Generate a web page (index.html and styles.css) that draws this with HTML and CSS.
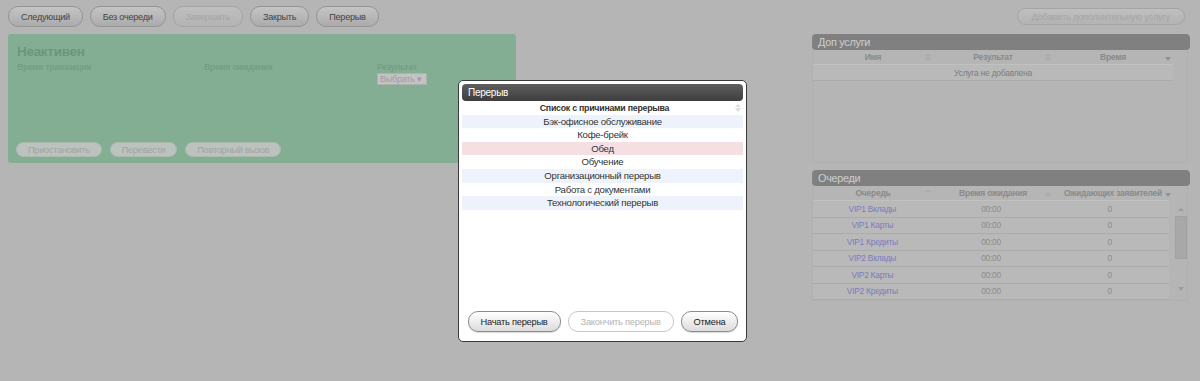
FILE: index.html
```html
<!DOCTYPE html>
<html lang="ru">
<head>
  <meta charset="UTF-8" />
  <title>Рабочее место оператора</title>
  <link rel="stylesheet" href="styles.css">
</head>
<body>

<div class="page">
  <div class="toolbar">
    <div class="toolbar-left">
      <button class="btn">Следующий</button>
      <button class="btn">Без очереди</button>
      <button class="btn" disabled>Завершить</button>
      <button class="btn">Закрыть</button>
      <button class="btn">Перерыв</button>
    </div>
    <button class="btn btn-small" disabled>Добавить дополнительную услугу</button>
  </div>

  <div class="main">
    <div class="state-panel">
      <h2>Неактивен</h2>
      <div class="state-fields">
        <div class="field f-trans">Время транзакции</div>
        <div class="field f-wait">Время ожидания</div>
        <div class="field f-result">Результат<span class="select">Выбрать ▾</span></div>
      </div>
      <div class="state-actions">
        <button class="btn btn-faded" disabled>Приостановить</button>
        <button class="btn btn-faded" disabled>Перевести</button>
        <button class="btn btn-faded" disabled>Повторный вызов</button>
      </div>
    </div>

    <div class="side">
      <div class="panel">
        <div class="panel-title">Доп услуги</div>
        <div class="panel-body services">
          <table class="grid">
            <thead>
              <tr>
                <th><div class="th-in"><span>Имя</span><i class="sort both"></i></div></th>
                <th><div class="th-in"><span>Результат</span><i class="sort both"></i></div></th>
                <th><div class="th-in"><span>Время</span><i class="sort down active"></i></div></th>
              </tr>
            </thead>
            <tbody>
              <tr><td colspan="3">Услуга не добавлена</td></tr>
            </tbody>
          </table>
        </div>
      </div>

      <div class="panel">
        <div class="panel-title">Очереди</div>
        <div class="panel-body queues">
          <table class="grid">
            <thead>
              <tr>
                <th><div class="th-in"><span>Очередь</span><i class="sort up"></i></div></th>
                <th><div class="th-in"><span>Время ожидания</span><i class="sort down"></i></div></th>
                <th><div class="th-in"><span>Ожидающих заявителей</span><i class="sort down active"></i></div></th>
              </tr>
            </thead>
          </table>
          <div class="scroll-wrap">
            <table class="grid">
              <tbody>
                <tr><td class="q-name">VIP1 Вклады</td><td>00:00</td><td>0</td></tr>
                <tr><td class="q-name">VIP1 Карты</td><td>00:00</td><td>0</td></tr>
                <tr><td class="q-name">VIP1 Кредиты</td><td>00:00</td><td>0</td></tr>
                <tr><td class="q-name">VIP2 Вклады</td><td>00:00</td><td>0</td></tr>
                <tr><td class="q-name">VIP2 Карты</td><td>00:00</td><td>0</td></tr>
                <tr><td class="q-name">VIP2 Кредиты</td><td>00:00</td><td>0</td></tr>
              </tbody>
            </table>
            <div class="scrollbar">
              <i class="arr up"></i>
              <div class="track"><div class="thumb"></div></div>
              <i class="arr down"></i>
            </div>
          </div>
        </div>
      </div>
    </div>
  </div>
</div>

<div class="overlay"></div>

<div class="dialog">
  <div class="dialog-title">Перерыв</div>
  <div class="reasons">
    <div class="reasons-head"><span>Список с причинами перерыва</span><i class="sort both"></i></div>
    <div class="reason alt">Бэк-офисное обслуживание</div>
    <div class="reason">Кофе-брейк</div>
    <div class="reason selected">Обед</div>
    <div class="reason">Обучение</div>
    <div class="reason alt">Организационный перерыв</div>
    <div class="reason">Работа с документами</div>
    <div class="reason alt">Технологический перерыв</div>
  </div>
  <div class="dialog-buttons">
    <button class="btn btn-dlg">Начать перерыв</button>
    <button class="btn btn-dlg" disabled>Закончить перерыв</button>
    <button class="btn btn-dlg">Отмена</button>
  </div>
</div>

</body>
</html>
```

FILE: styles.css
```css
body {
  margin: 0;
  font-family: "Liberation Sans", Arial, sans-serif;
  letter-spacing: -0.25px;
  background: #e3e3e3;
  color: #333;
  height: 381px;
  overflow: hidden;
}
.page { padding: 6px 10px 0 8px; }

/* buttons */
.btn {
  font-family: inherit;
  letter-spacing: inherit;
  font-size: 9.1px;
  height: 21px;
  padding: 0 12px;
  white-space: nowrap;
  border: 1px solid #b9b9b9;
  border-radius: 10px;
  background: linear-gradient(#f6f6f6, #d6d6d6);
  color: #555;
  cursor: pointer;
}
.btn:disabled { color: #cfcfcf; background: linear-gradient(#f0f0f0, #e0e0e0); border-color: #cdcdcd; }
.btn-small { height: 17px; margin: 2px 5px 0 0; padding: 0 14px; border-radius: 9px; font-size: 9.3px; }

.toolbar { display: flex; justify-content: space-between; align-items: flex-start; height: 28px; }
.toolbar-left { display: flex; gap: 7px; }

.main { display: flex; justify-content: space-between; }

/* left state panel */
.state-panel {
  width: 508px;
  height: 129px;
  box-sizing: border-box;
  background: #a6dab9;
  border-radius: 3px;
  padding: 10px 8px 0 9px;
  display: flex;
  flex-direction: column;
}
.state-panel h2 { margin: 0; font-size: 13.5px; letter-spacing: -0.3px; color: #88bb99; line-height: 16px; }
.state-fields { display: flex; font-size: 8.6px; font-weight: bold; color: #92c6a4; margin-top: 2px; height: 80px; }
.field { line-height: 11px; }
.f-trans { width: 187px; }
.f-wait { width: 173px; }
.f-result { display: flex; flex-direction: column; align-items: flex-start; }
.select {
  font-weight: normal;
  font-size: 9px;
  background: #f4f4f4;
  color: #c6c6c6;
  padding: 0 4px 0 2px;
  border: 1px solid #ddd;
  line-height: 10px;
}
.state-actions { display: flex; gap: 8px; margin-left: -1px; }
.btn-faded {
  height: 15px;
  font-size: 9.2px;
  padding: 0 11px;
  background: #ebf3ee !important;
  border-color: #d8e8de !important;
  color: #c7d0ca !important;
}

/* right side panels */
.side { width: 378px; }
.panel { margin-bottom: 7px; }
.panel-title {
  background: #a0a0a0;
  color: #fff;
  font-size: 10.8px;
  line-height: 16px;
  padding-left: 6px;
  border-radius: 4px;
}
.panel-body { border: 1px solid #dcdcdc; border-top: none; margin-right: 2px; }
.services { height: 112px; }
.queues { height: 114px; }

.grid { width: 360px; border-collapse: collapse; table-layout: fixed; font-size: 8.4px; }
.grid th { font-weight: bold; font-size: 8.5px; color: #adadad; height: 14px; padding: 0; white-space: nowrap; }
.th-in { display: flex; align-items: center; }
.th-in span { flex: 1; text-align: center; padding-left: 10px; }
.grid td {
  height: 15px;
  padding: 0;
  text-align: center;
  color: #b0b0b0;
  background: #e8e8e8;
  border-top: 1px solid #f2f2f2;
  border-bottom: 1px solid #d6d6d6;
}
.services td { font-size: 8.5px; color: #9c9c9c; }
.q-name { color: #9a9aee !important; }

.sort { width: 10px; height: 10px; display: inline-block; position: relative; flex: none; }
.sort::before, .sort::after { content: ""; position: absolute; left: 2px; border: 3px solid transparent; }
.sort.both::before, .sort.up::before { top: -2px; border-bottom: 3px solid #d6d6d6; }
.sort.both::after, .sort.down::after { top: 5px; border-top: 4px solid #d6d6d6; }
.sort.active::after { border-top-color: #b0b0dd; }

.scroll-wrap { display: flex; }
.scrollbar { width: 12px; margin-left: 6px; display: flex; flex-direction: column; align-items: center; height: 100px; }
.arr { width: 0; height: 0; border: 3px solid transparent; }
.arr.up { border-bottom: 3px solid #c4c4c4; margin-top: 5px; }
.arr.down { border-top: 4px solid #c4c4c4; margin-bottom: 6px; margin-top: auto; }
.track { width: 12px; }
.thumb { height: 43px; margin-top: 5px; background: #d2d2d2; border: 1px solid #cacaca; box-sizing: border-box; }

/* modal */
.overlay { position: fixed; inset: 0; background: rgba(0, 0, 0, 0.2); }
.dialog {
  position: absolute;
  left: 458px;
  top: 80px;
  width: 289px;
  height: 262px;
  box-sizing: border-box;
  background: #fff;
  border: 1px solid #3a3a3a;
  border-radius: 5px;
  padding: 3px;
  display: flex;
  flex-direction: column;
}
.dialog-title {
  background: linear-gradient(#5e5e5e, #3e3e3e);
  color: #fff;
  font-size: 10px;
  line-height: 17px;
  padding-left: 6px;
  border-radius: 4px;
}
.reasons { flex: 1; font-size: 9.6px; color: #333; }
.reasons-head { display: flex; align-items: center; height: 13.6px; font-weight: bold; font-size: 8.8px; }
.reasons-head span { flex: 1; text-align: center; padding-left: 14px; }
.reasons-head .sort::before { border-bottom-color: #ddd; }
.reasons-head .sort::after { border-top-color: #ddd; }
.reason { height: 13.6px; line-height: 13.6px; text-align: center; }
.reason.alt { background: #eef3fb; }
.reason.selected { background: #f4dfe3; }

.dialog-buttons { display: flex; justify-content: center; gap: 7px; margin-bottom: 6px; padding-left: 1px; }
.btn-dlg {
  font-size: 9.3px;
  padding: 0 12px;
  color: #222;
  border-color: #8c8c8c;
  background: linear-gradient(#ffffff, #dcdcdc);
  box-shadow: 0 1px 1px rgba(0, 0, 0, 0.15);
}
.btn-dlg:disabled { color: #b5b5b5; border-color: #c6c6c6; background: #fff; box-shadow: none; }
```
